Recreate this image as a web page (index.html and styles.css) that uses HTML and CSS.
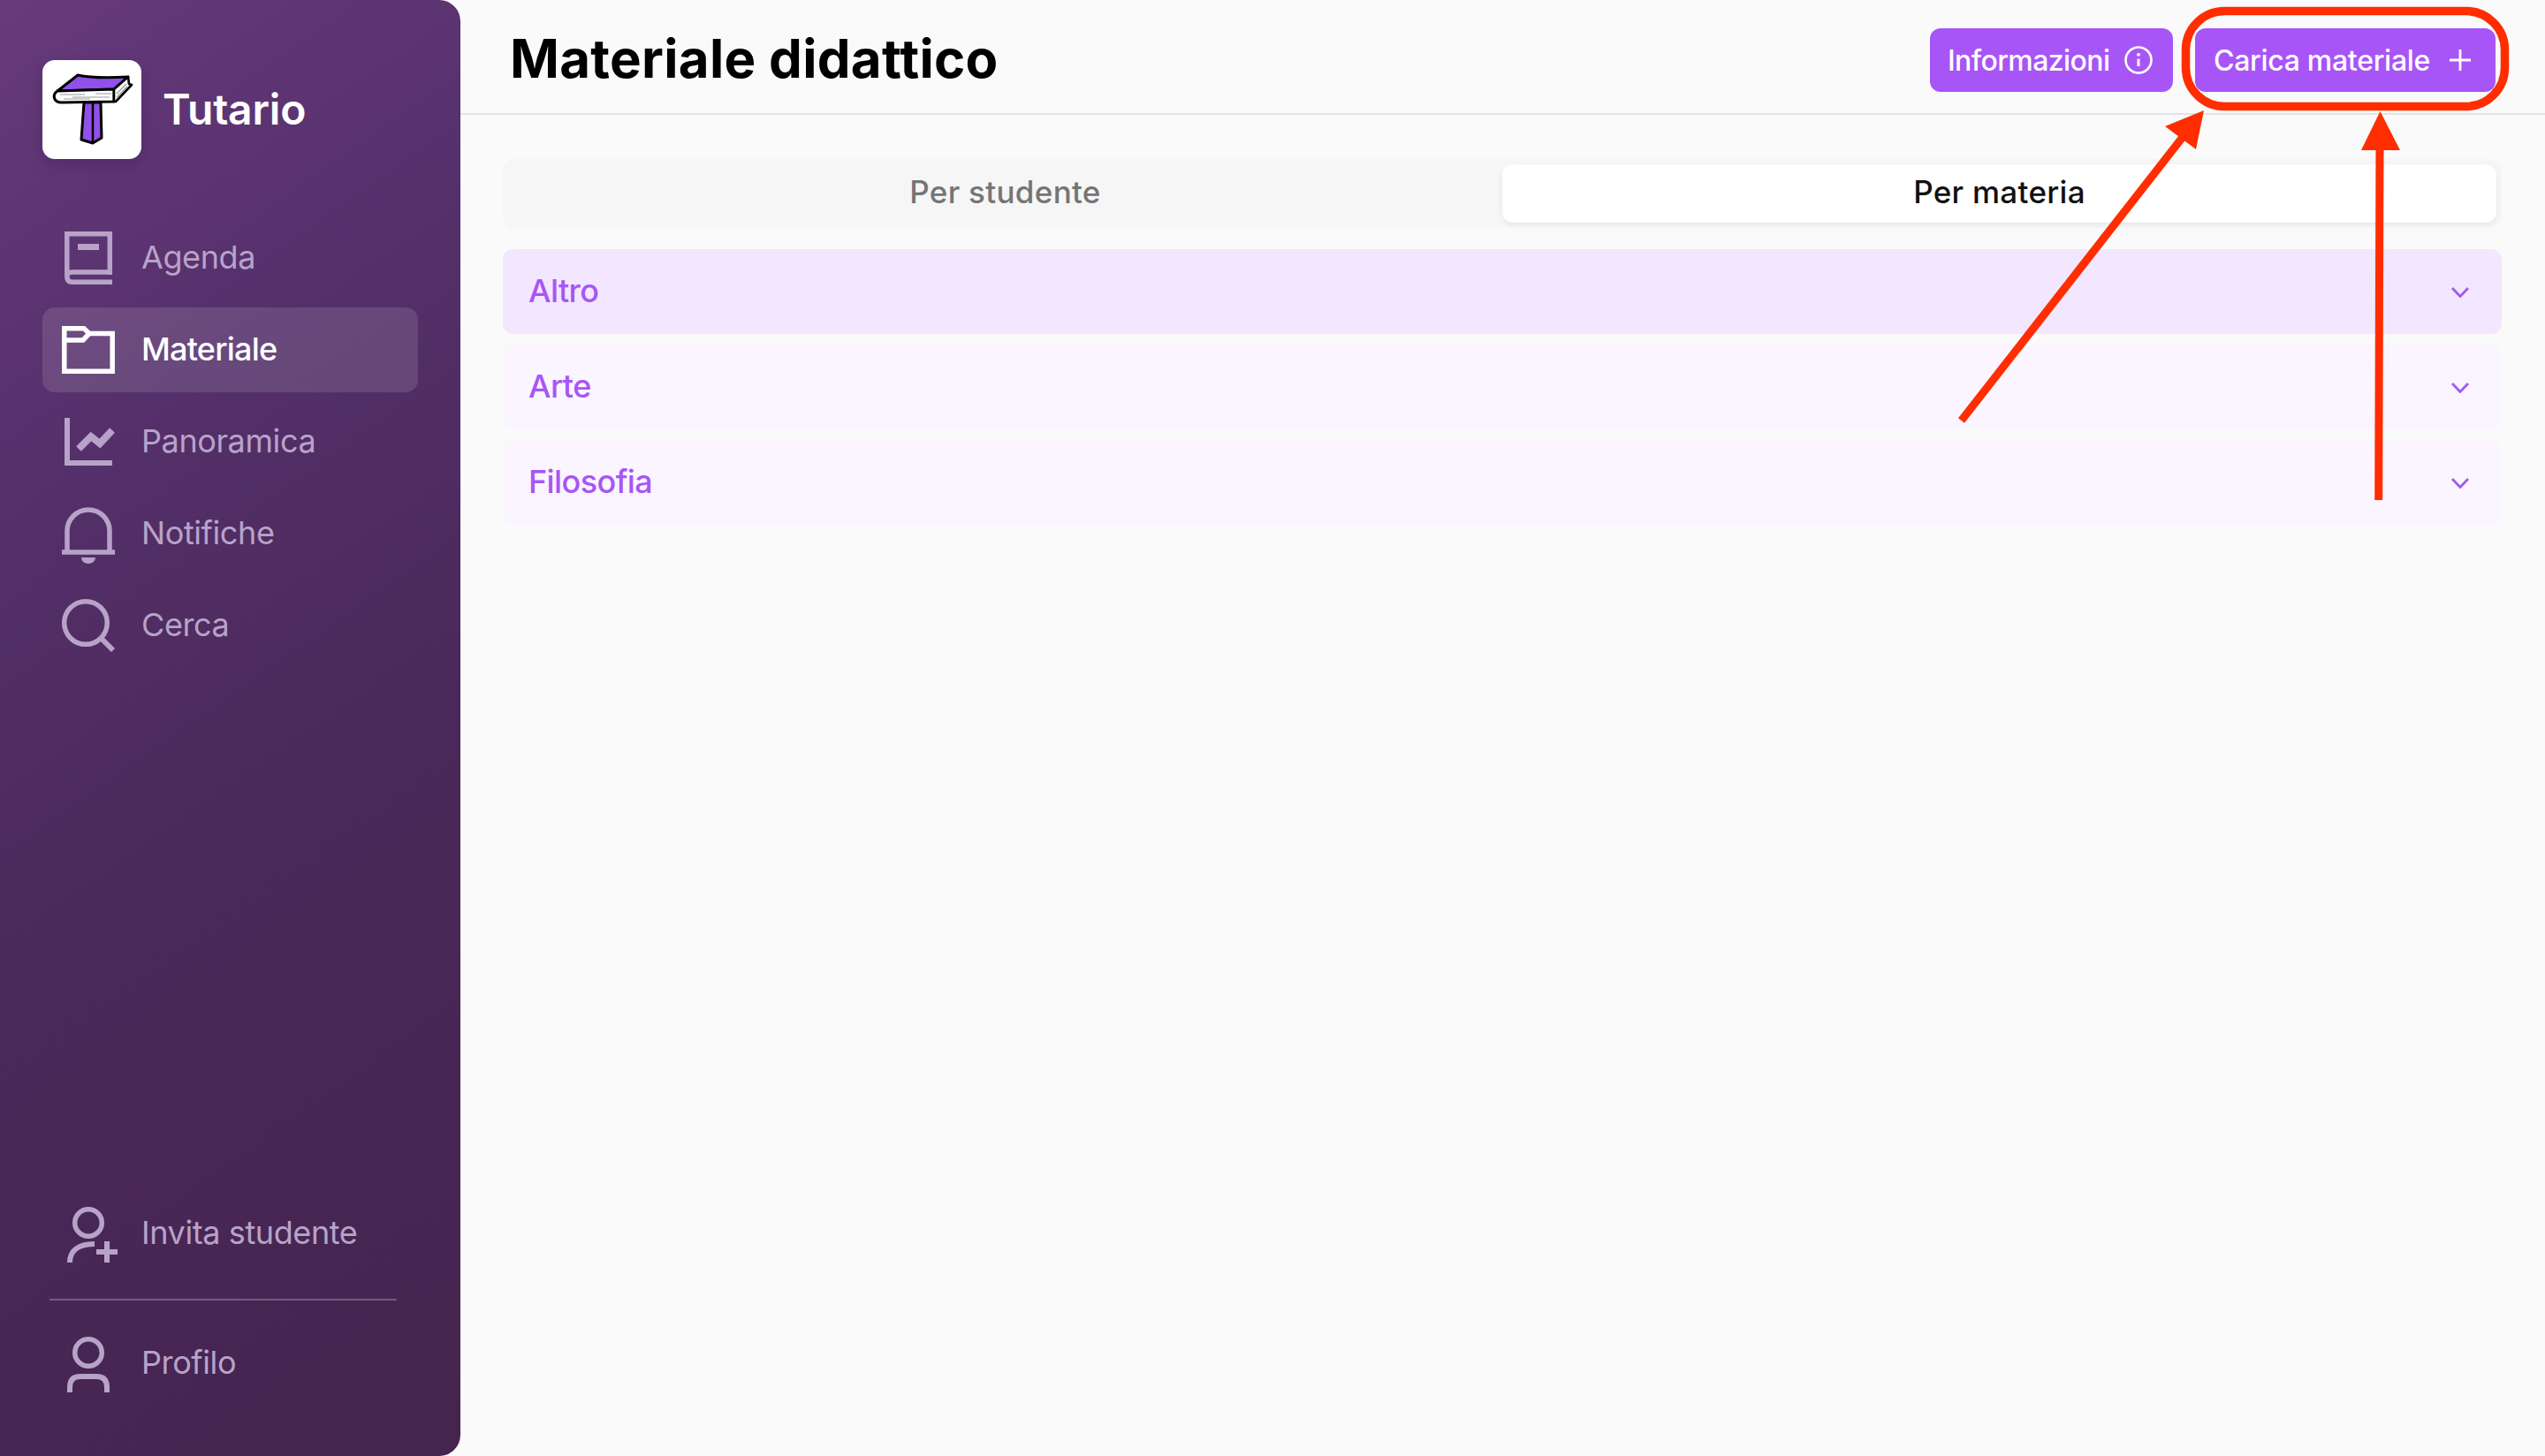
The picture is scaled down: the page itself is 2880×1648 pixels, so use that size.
FILE: index.html
```html
<!DOCTYPE html>
<html lang="it">
<head>
<meta charset="utf-8">
<title>Materiale didattico</title>
<link rel="stylesheet" href="styles.css">
</head>
<body>
<aside class="sidebar">
  <div class="brand">
    <div class="logo">
      <svg viewBox="0 0 112 112" width="112" height="112">
        <path d="M47 48H66L67 88L57 94L44 90Z" fill="#9050ea" stroke="#000" stroke-width="3" stroke-linejoin="round"/>
        <path d="M57 48V93" stroke="#000" stroke-width="2.5"/>
        <path d="M40 17C58 21 80 20 97 19L81 33L17 35Z" fill="#9050ea" stroke="#000" stroke-width="3" stroke-linejoin="round"/>
        <path d="M17 35L81 33V47L22 48C12 48 11 39 17 35Z" fill="#fff" stroke="#000" stroke-width="3" stroke-linejoin="round"/>
        <path d="M81 33L97 19L98 27L101 28L83 47H81Z" fill="#fff" stroke="#000" stroke-width="2.6" stroke-linejoin="round"/>
        <path d="M20 39H48M34 42H76M24 44H54M60 38H78M84 38L95 27M84 42L96 30" stroke="#999" stroke-width="1.2" fill="none"/>
      </svg>
    </div>
    <span class="brand-name">Tutario</span>
  </div>
  <nav class="nav">
    <a class="nav-item">
      <svg class="nav-icon" viewBox="0 0 60 60"><path d="M54.3 49V2.8H5.8V51Q5.8 57.2 12 57.2H57M5.8 51Q5.8 46 12 46H54.3" fill="none" stroke="currentColor" stroke-width="5.5"/><rect x="18" y="14" width="24" height="7" fill="currentColor"/></svg>
      <span>Agenda</span>
    </a>
    <a class="nav-item active">
      <svg class="nav-icon" viewBox="0 0 60 60"><path d="M2.8 5.8H25L31 11.5H57.2V54.2H2.8ZM2.8 19H24L31 11.5" fill="none" stroke="currentColor" stroke-width="5.5"/></svg>
      <span>Materiale</span>
    </a>
    <a class="nav-item">
      <svg class="nav-icon" viewBox="0 0 60 60"><path d="M6 3V54H57" fill="none" stroke="currentColor" stroke-width="6"/><path d="M19 38L33 24L43 32L57 17" fill="none" stroke="currentColor" stroke-width="8"/></svg>
      <span>Panoramica</span>
    </a>
    <a class="nav-item">
      <svg class="nav-icon" viewBox="0 0 60 60"><path d="M6 50V27A24 24 0 0 1 54 27V50M0 51H60" fill="none" stroke="currentColor" stroke-width="5.5"/><path d="M22 57H38A8 7 0 0 1 22 57Z" fill="currentColor"/></svg>
      <span>Notifiche</span>
    </a>
    <a class="nav-item">
      <svg class="nav-icon" viewBox="0 0 60 60"><circle cx="27" cy="27" r="24.3" fill="none" stroke="currentColor" stroke-width="5.5"/><path d="M44 44L58 58" stroke="currentColor" stroke-width="6"/></svg>
      <span>Cerca</span>
    </a>
  </nav>
  <div class="nav-bottom">
    <a class="nav-item">
      <svg class="nav-icon" viewBox="0 0 60 60"><circle cx="30" cy="18" r="15.3" fill="none" stroke="currentColor" stroke-width="5.5"/><path d="M9 63C9 50 18 42 37 42" fill="none" stroke="currentColor" stroke-width="6"/><path d="M39 51H63M51 39V63" stroke="currentColor" stroke-width="6"/></svg>
      <span>Invita studente</span>
    </a>
    <hr class="nav-divider">
    <a class="nav-item">
      <svg class="nav-icon" viewBox="0 0 60 60"><circle cx="30" cy="18" r="15.3" fill="none" stroke="currentColor" stroke-width="5.5"/><path d="M9 63V57Q9 45 21 45H39Q51 45 51 57V63" fill="none" stroke="currentColor" stroke-width="6"/></svg>
      <span>Profilo</span>
    </a>
  </div>
</aside>
<main class="main">
  <header class="topbar">
    <h1 class="title">Materiale didattico</h1>
    <div class="actions">
      <button class="btn btn-info">Informazioni
        <svg class="btn-icon" viewBox="0 0 32 32"><circle cx="16" cy="16" r="14.5" fill="none" stroke="#fff" stroke-width="2.6"/><path d="M16 14.5V23" stroke="#fff" stroke-width="3"/><circle cx="16" cy="9.8" r="1.9" fill="#fff"/></svg>
      </button>
      <button class="btn btn-upload">Carica materiale
        <svg class="btn-icon" viewBox="0 0 32 32"><path d="M16 4V28M4 16H28" stroke="#fff" stroke-width="2.8"/></svg>
      </button>
    </div>
  </header>
  <section class="content">
    <div class="tabs">
      <div class="tab">Per studente</div>
      <div class="tab selected">Per materia</div>
    </div>
    <div class="accordion">
      <div class="row open"><span>Altro</span><svg class="chev" viewBox="0 0 20 12"><path d="M1 1L10 10.5L19 1" fill="none" stroke="#9d5cf0" stroke-width="2.8"/></svg></div>
      <div class="row"><span>Arte</span><svg class="chev" viewBox="0 0 20 12"><path d="M1 1L10 10.5L19 1" fill="none" stroke="#9d5cf0" stroke-width="2.8"/></svg></div>
      <div class="row"><span>Filosofia</span><svg class="chev" viewBox="0 0 20 12"><path d="M1 1L10 10.5L19 1" fill="none" stroke="#9d5cf0" stroke-width="2.8"/></svg></div>
    </div>
  </section>
</main>
<svg class="annotations" viewBox="0 0 2880 1648" width="2880" height="1648">
  <rect x="2473.5" y="12.5" width="361" height="108" rx="44" fill="none" stroke="#ff2d00" stroke-width="9.5"/>
  <path d="M2219.5 476L2474 150" stroke="#ff2d00" stroke-width="9"/>
  <path d="M2494 125L2450 143L2485 169Z" fill="#ff2d00"/>
  <path d="M2691.7 566L2693 165" stroke="#ff2d00" stroke-width="9"/>
  <path d="M2693.5 126L2672 170H2716Z" fill="#ff2d00"/>
</svg>
</body>
</html>
```
FILE: styles.css
```css
* { box-sizing: border-box; }
html, body { margin: 0; height: 100%; }
body {
  display: flex;
  height: 1648px;
  overflow: hidden;
  background: #fafafa;
  font-family: Inter, "Liberation Sans", sans-serif;
  position: relative;
}
.sidebar {
  width: 521px;
  flex: none;
  display: flex;
  flex-direction: column;
  padding: 68px 48px 57px;
  border-radius: 0 24px 24px 0;
  background: linear-gradient(145deg, #673a7c 0%, #55306b 28%, #4a2859 58%, #45244f 100%);
  color: #b8a3c8;
}
.brand { display: flex; align-items: center; gap: 24px; }
.logo {
  width: 112px;
  height: 112px;
  background: #fff;
  border-radius: 14px;
  box-shadow: 0 6px 16px rgba(40, 10, 60, .22);
}
.logo svg { display: block; }
.brand-name { font-size: 48px; font-weight: 600; color: #fff; letter-spacing: -.2px; position: relative; top: -1px; }
.nav { margin-top: 64px; display: flex; flex-direction: column; gap: 8px; }
.nav-bottom { margin-top: auto; display: flex; flex-direction: column; }
.nav-item {
  height: 96px;
  display: flex;
  align-items: center;
  gap: 30px;
  padding-left: 22px;
  border-radius: 14px;
  font-size: 36px;
  letter-spacing: -.4px;
}
.nav-item span { margin-top: -2px; }
.nav-item.active { background: rgba(255, 255, 255, .12); color: #fff; font-weight: 500; letter-spacing: -.8px; }
.nav-icon { width: 60px; height: 60px; flex: none; overflow: visible; }
.nav-divider { width: 393px; height: 2px; margin: 26px 0 23px 8px; border: 0; background: rgba(255, 255, 255, .25); }
.main { flex: 1; min-width: 0; display: flex; flex-direction: column; }
.topbar {
  height: 130px;
  flex: none;
  display: flex;
  align-items: flex-start;
  justify-content: space-between;
  padding: 32px 56px 0 56px;
  border-bottom: 2px solid #e3e3e3;
}
.title { margin: -2px 0 0; font-size: 60px; line-height: 72px; font-weight: 700; color: #000; letter-spacing: .3px; }
.actions { display: flex; gap: 25px; }
.btn {
  height: 72px;
  display: flex;
  align-items: center;
  justify-content: space-between;
  border: 0;
  border-radius: 12px;
  background: #a855f7;
  color: #fff;
  font: 500 32px Inter, "Liberation Sans", sans-serif;
  letter-spacing: -.3px;
}
.btn-info { width: 275px; padding: 0 23px 0 20px; letter-spacing: -.6px; }
.btn-upload { width: 340px; padding: 0 24px 0 21px; }
.btn-icon { width: 32px; height: 32px; flex: none; }
.content { padding: 50px 49px 0 48px; display: flex; flex-direction: column; gap: 24px; }
.tabs {
  height: 78px;
  display: grid;
  grid-template-columns: 1fr 1fr;
  padding: 6px;
  border-radius: 12px;
  background: #f6f6f6;
}
.tab {
  display: flex;
  align-items: center;
  justify-content: center;
  border-radius: 12px;
  font-size: 35px;
  font-weight: 500;
  letter-spacing: .3px;
  color: #757575;
  padding-bottom: 4px;
}
.tab.selected { background: #fff; color: #111; box-shadow: 0 2px 6px rgba(0, 0, 0, .07); }
.accordion { display: flex; flex-direction: column; gap: 12px; }
.row {
  height: 96px;
  display: flex;
  align-items: center;
  justify-content: space-between;
  padding: 0 37px 0 29px;
  border-radius: 12px;
  background: #faf5ff;
  color: #a855f7;
  font-size: 36px;
  font-weight: 500;
  letter-spacing: -.6px;
}
.row span { margin-top: -2px; }
.row.open { background: #f2e7fe; }
.chev { width: 20px; height: 12px; margin-top: 2px; flex: none; }
.annotations { position: absolute; left: 0; top: 0; pointer-events: none; }
```
